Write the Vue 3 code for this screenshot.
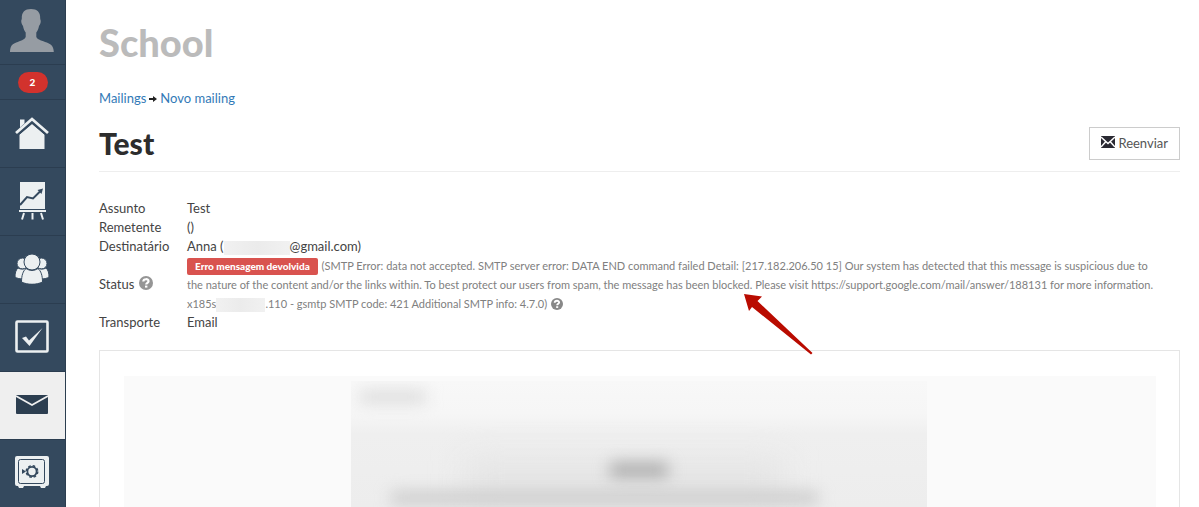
<script setup>
const details = [
  { label: 'Assunto', value: 'Test' },
  { label: 'Remetente', value: '()' },
]
</script>

<template>
  <div class="app">
    <nav class="sidebar" aria-label="Menu">
      <a href="#" class="item avatar" aria-label="Perfil">
        <svg width="44" height="43" viewBox="0 0 44 43" fill="#969ca3">
          <path d="M21 0c6 0 9.500 3 9.200 9.500 0 1 .8 1.500.5 3.500-.2 2-1.200 3-1.700 4-.5 3-1.500 5-2.700 6.500v4.500c1.500 3 6 3.800 10.500 5.500 4.500 1.600 6.800 4 7 9.500H0c.2-5.500 1.700-7.900 6.200-9.500C10.700 31.800 14.200 31 15.700 28v-4.500C14.500 22 13.500 20 13 17c-.5-1-1.500-2-1.700-4-.3-2 .5-2.500.5-3.500C11.500 3 15 0 21 0z" />
        </svg>
      </a>
      <a href="#" class="item alerts" aria-label="Notificações"><span class="count">2</span></a>
      <a href="#" class="item" aria-label="Início">
        <svg width="34" height="32" viewBox="0 0 34 32">
          <path d="M5 2.500h4.500v4L5 10.500z" fill="#ecf0f1" />
          <path d="M17 7l12.500 10.500V32h-25V17.500z" fill="#ecf0f1" />
          <path d="M1.500 17.500L17 4l15.500 13.500" fill="none" stroke="#34495e" stroke-width="4" />
          <path d="M1 16L17 2l16 14" fill="none" stroke="#ecf0f1" stroke-width="2.800" />
        </svg>
      </a>
      <a href="#" class="item" aria-label="Relatórios">
        <svg width="30" height="38" viewBox="0 0 30 38">
          <path d="M3 0h25v27H3z" fill="#ecf0f1" />
          <path d="M3 23l7-8 6 1.500 7-7" fill="none" stroke="#34495e" stroke-width="2" />
          <path d="M20.500 8l5.500-1.500L24.500 12z" fill="#34495e" />
          <path d="M2 29h27M7 31l-2 6.500M15.500 31v6.500M24 31l2 6.500" fill="none" stroke="#ecf0f1" stroke-width="2" />
        </svg>
      </a>
      <a href="#" class="item" aria-label="Usuários">
        <svg width="34" height="30" viewBox="0 0 34 30" fill="#ecf0f1" stroke="#34495e" stroke-width="1">
          <circle cx="7.500" cy="9.500" r="5.500" />
          <circle cx="26.500" cy="9.500" r="5.500" />
          <path d="M3 14c2.500 1.500 6 1.500 8.500 0L9 25c-4 0-7-.5-9-2 0-4 .8-7 3-9z" />
          <path d="M31 14c-2.500 1.500-6 1.500-8.500 0L25 25c4 0 7-.5 9-2 0-4-.8-7-3-9z" />
          <path d="M11 14.500c3.500 2.500 8.500 2.500 12 0 3 2.500 4.500 7 4.500 13.500-6 3-15 3-21 0 0-6.500 1.500-11 4.500-13.500z" />
          <circle cx="17" cy="8" r="8" />
        </svg>
      </a>
      <a href="#" class="item" aria-label="Tarefas">
        <svg width="34" height="34" viewBox="0 0 34 34">
          <rect x="1.500" y="1.500" width="31" height="30" rx="1" fill="none" stroke="#ecf0f1" stroke-width="2.600" />
          <path d="M7 18l4-1.500 3 4L27.500 8 14.500 26z" fill="#ecf0f1" />
        </svg>
      </a>
      <a href="#" class="item active" aria-label="Mailings">
        <svg width="32" height="20" viewBox="0 0 32 20">
          <rect width="32" height="19" rx="1" fill="#2c3e50" />
          <path d="M0 1l16 9 16-9" fill="none" stroke="#efefef" stroke-width="1.800" />
        </svg>
      </a>
      <a href="#" class="item" aria-label="Cofre">
        <svg width="34" height="34" viewBox="0 0 34 34">
          <path d="M2 0h30q2 0 2 2v26q0 2-2 2H2q-2 0-2-2V2q0-2 2-2zM3 30h6l-1 2H4zM25 30h6l-1 2h-4z" fill="#ecf0f1" />
          <rect x="3.500" y="3.500" width="26" height="24" rx="2" fill="none" stroke="#34495e" stroke-width="1" />
          <circle cx="17" cy="15.500" r="4.600" fill="none" stroke="#34495e" stroke-width="1.800" />
          <circle cx="17" cy="15.500" r="5.800" fill="none" stroke="#34495e" stroke-width="1.400" stroke-dasharray="2.600 1.955" />
          <path d="M7 13l4 2.500L7 18z" fill="#34495e" />
        </svg>
      </a>
    </nav>

    <main class="content">
      <div class="brand">School</div>
      <nav class="crumbs" aria-label="Caminho">
        <a href="#">Mailings</a>
        <svg class="arrow" width="8" height="8" viewBox="0 0 8 8"><path d="M0 3h4V1l4 3-4 3V5H0z" fill="#222" /></svg>
        <a href="#">Novo mailing</a>
      </nav>

      <header class="head">
        <h1>Test</h1>
        <button type="button" class="resend">
          <svg width="14" height="14" viewBox="0 0 14 14">
            <path d="M0 0h14v12H0z" fill="#2b2a33" />
            <path d="M0 1l7 6.500L14 1M0 11l4.500-5M14 11L9.500 6" fill="none" stroke="#fff" stroke-width="1.500" />
          </svg>
          Reenviar
        </button>
      </header>

      <table class="details">
        <tbody>
          <tr v-for="row in details" :key="row.label">
            <th scope="row">{{ row.label }}</th>
            <td>{{ row.value }}</td>
          </tr>
          <tr>
            <th scope="row">Destinatário</th>
            <td>Anna (<span class="hidden-name"></span>@gmail.com)</td>
          </tr>
          <tr>
            <th scope="row">
              Status
              <svg class="help" width="14" height="14" viewBox="0 0 14 14">
                <circle cx="7" cy="7" r="7" fill="#959595" />
                <path d="M4.300 5.500C4.400 2.500 9.700 2.500 9.500 5.300 9.400 6.900 7.200 6.800 7.200 8.600" fill="none" stroke="#fff" stroke-width="2.200" />
                <path d="M6 9.600h2.400v2H6z" fill="#fff" />
              </svg>
            </th>
            <td class="status">
              <strong class="label">Erro mensagem devolvida</strong>
              (SMTP Error: data not accepted. SMTP server error: DATA END command failed Detail: [217.182.206.50 15] Our system has detected that this message is suspicious due to<br>
              the nature of the content and/or the links within. To best protect our users from spam, the message has been blocked. Please visit https://support.google.com/mail/answer/188131 for more information.<br>
              x185s<span class="hidden-id"></span>.110 - gsmtp SMTP code: 421 Additional SMTP info: 4.7.0)
              <svg class="help small" width="12" height="12" viewBox="0 0 14 14">
                <circle cx="7" cy="7" r="7" fill="#888" />
                <path d="M4.300 5.500C4.400 2.500 9.700 2.500 9.500 5.300 9.400 6.900 7.200 6.800 7.200 8.600" fill="none" stroke="#fff" stroke-width="2.200" />
                <path d="M6 9.600h2.400v2H6z" fill="#fff" />
              </svg>
              <svg class="pointer" width="70" height="62" viewBox="0 0 70 62">
                <path d="M0 0l18 2.500-4.500 4.500L68.500 59 67 60.500 8 13l-3 4z" fill="#b90b00" />
              </svg>
            </td>
          </tr>
          <tr>
            <th scope="row">Transporte</th>
            <td>Email</td>
          </tr>
        </tbody>
      </table>

      <section class="preview" aria-label="Mensagem">
        <div class="canvas">
          <div class="mail">
            <div class="shade"></div>
            <div class="blob sender"></div>
            <div class="blob halo"></div>
            <div class="blob title"></div>
            <div class="blob text"></div>
          </div>
        </div>
      </section>
    </main>
  </div>
</template>

<style>
body {
  background: #fff;
  overflow: hidden;
}
</style>

<style scoped>
.app {
  display: flex;
  height: 100vh;
  overflow: hidden;
  font: 13px/19px Lato, "Open Sans", sans-serif;
  color: #444;
}
.app * {
  box-sizing: border-box;
}
.sidebar {
  display: flex;
  flex-direction: column;
  flex: none;
  width: 66px;
  background: #34495e;
}
.item {
  display: flex;
  flex: none;
  align-items: center;
  justify-content: center;
  height: 68px;
  padding-right: 1px;
  padding-bottom: 1px;
  border-bottom: 1px solid #2b3d50;
  border-right: 1px solid #2c3e50;
  text-decoration: none;
}
.avatar {
  height: 65px;
  padding-right: 2px;
  padding-bottom: 3px;
}
.alerts {
  height: 35px;
  padding: 0;
}
.count {
  width: 30px;
  border-radius: 11px;
  background: #d2322d;
  color: #fff;
  font-size: 10px;
  font-weight: 900;
  line-height: 21px;
  text-align: center;
}
.active {
  background: #efefef;
}
.content {
  display: flex;
  flex-direction: column;
  flex: 1;
  min-width: 0;
  padding: 19px 19px 0 33px;
}
.brand {
  color: #bbb;
  font-size: 38px;
  font-weight: 900;
  line-height: 46px;
}
.crumbs {
  display: flex;
  align-items: center;
  gap: 3px;
  margin-top: 24px;
}
.crumbs a {
  color: #337ab7;
  text-decoration: none;
}
.head {
  display: flex;
  align-items: center;
  justify-content: space-between;
  margin-top: 15px;
  padding-bottom: 8px;
  border-bottom: 1px solid #eee;
}
h1 {
  margin: 0;
  color: #2d2d2d;
  font-size: 30px;
  font-weight: 900;
  line-height: 40px;
}
.resend {
  display: flex;
  align-items: center;
  gap: 3px;
  height: 33px;
  padding: 0 11px;
  border: 1px solid #ccc;
  background: #fff;
  color: #555;
  font: inherit;
}
.details {
  margin-top: 27px;
  border-collapse: collapse;
}
th,
td {
  padding: 0;
  font-weight: 400;
  text-align: left;
  white-space: nowrap;
}
th {
  width: 88px;
}
.hidden-name,
.hidden-id {
  display: inline-block;
  height: 14px;
  background: linear-gradient(90deg, #f1f1f1, #ebebeb 50%, #f1f1f1);
  vertical-align: middle;
}
.hidden-name {
  width: 66px;
}
.hidden-id {
  width: 49px;
}
.status {
  position: relative;
  color: #808080;
  font-size: 11px;
}
.label {
  display: inline-block;
  margin-right: 1px;
  padding: 0 8px;
  border-radius: 2px;
  background: #d9534f;
  color: #fff;
  font-size: 10px;
  font-weight: 900;
  line-height: 17px;
}
.help {
  margin-left: 1px;
  vertical-align: -1px;
}
.small {
  vertical-align: -2px;
}
.pointer {
  position: absolute;
  top: 38px;
  left: 557px;
}
.preview {
  display: flex;
  flex: 1;
  margin-top: 18px;
  padding: 25px 23px 0 24px;
  border: 1px solid #e5e5e5;
  border-bottom: 0;
}
.canvas {
  display: flex;
  justify-content: center;
  flex: 1;
  padding-top: 5px;
  padding-right: 2px;
  background: #fafafa;
}
.mail {
  position: relative;
  width: 56%;
  background: #f7f7f7;
  overflow: hidden;
}
.shade {
  position: absolute;
  inset: 0;
  background: linear-gradient(#f8f8f8, #f6f6f6 26%, #efefef 42%, #ededed);
}
.blob {
  position: absolute;
  filter: blur(8px);
}
.sender {
  top: 10px;
  left: 9px;
  width: 66px;
  height: 12px;
  background: #dadada;
}
.halo {
  top: 80px;
  left: 20%;
  width: 55%;
  height: 40px;
  background: #e4e4e4;
  filter: blur(16px);
}
.title {
  top: 82px;
  left: 45%;
  width: 58px;
  height: 14px;
  background: #a8a8a8;
}
.text {
  top: 111px;
  left: 7%;
  width: 74%;
  height: 12px;
  background: #c8c8c8;
}
</style>
